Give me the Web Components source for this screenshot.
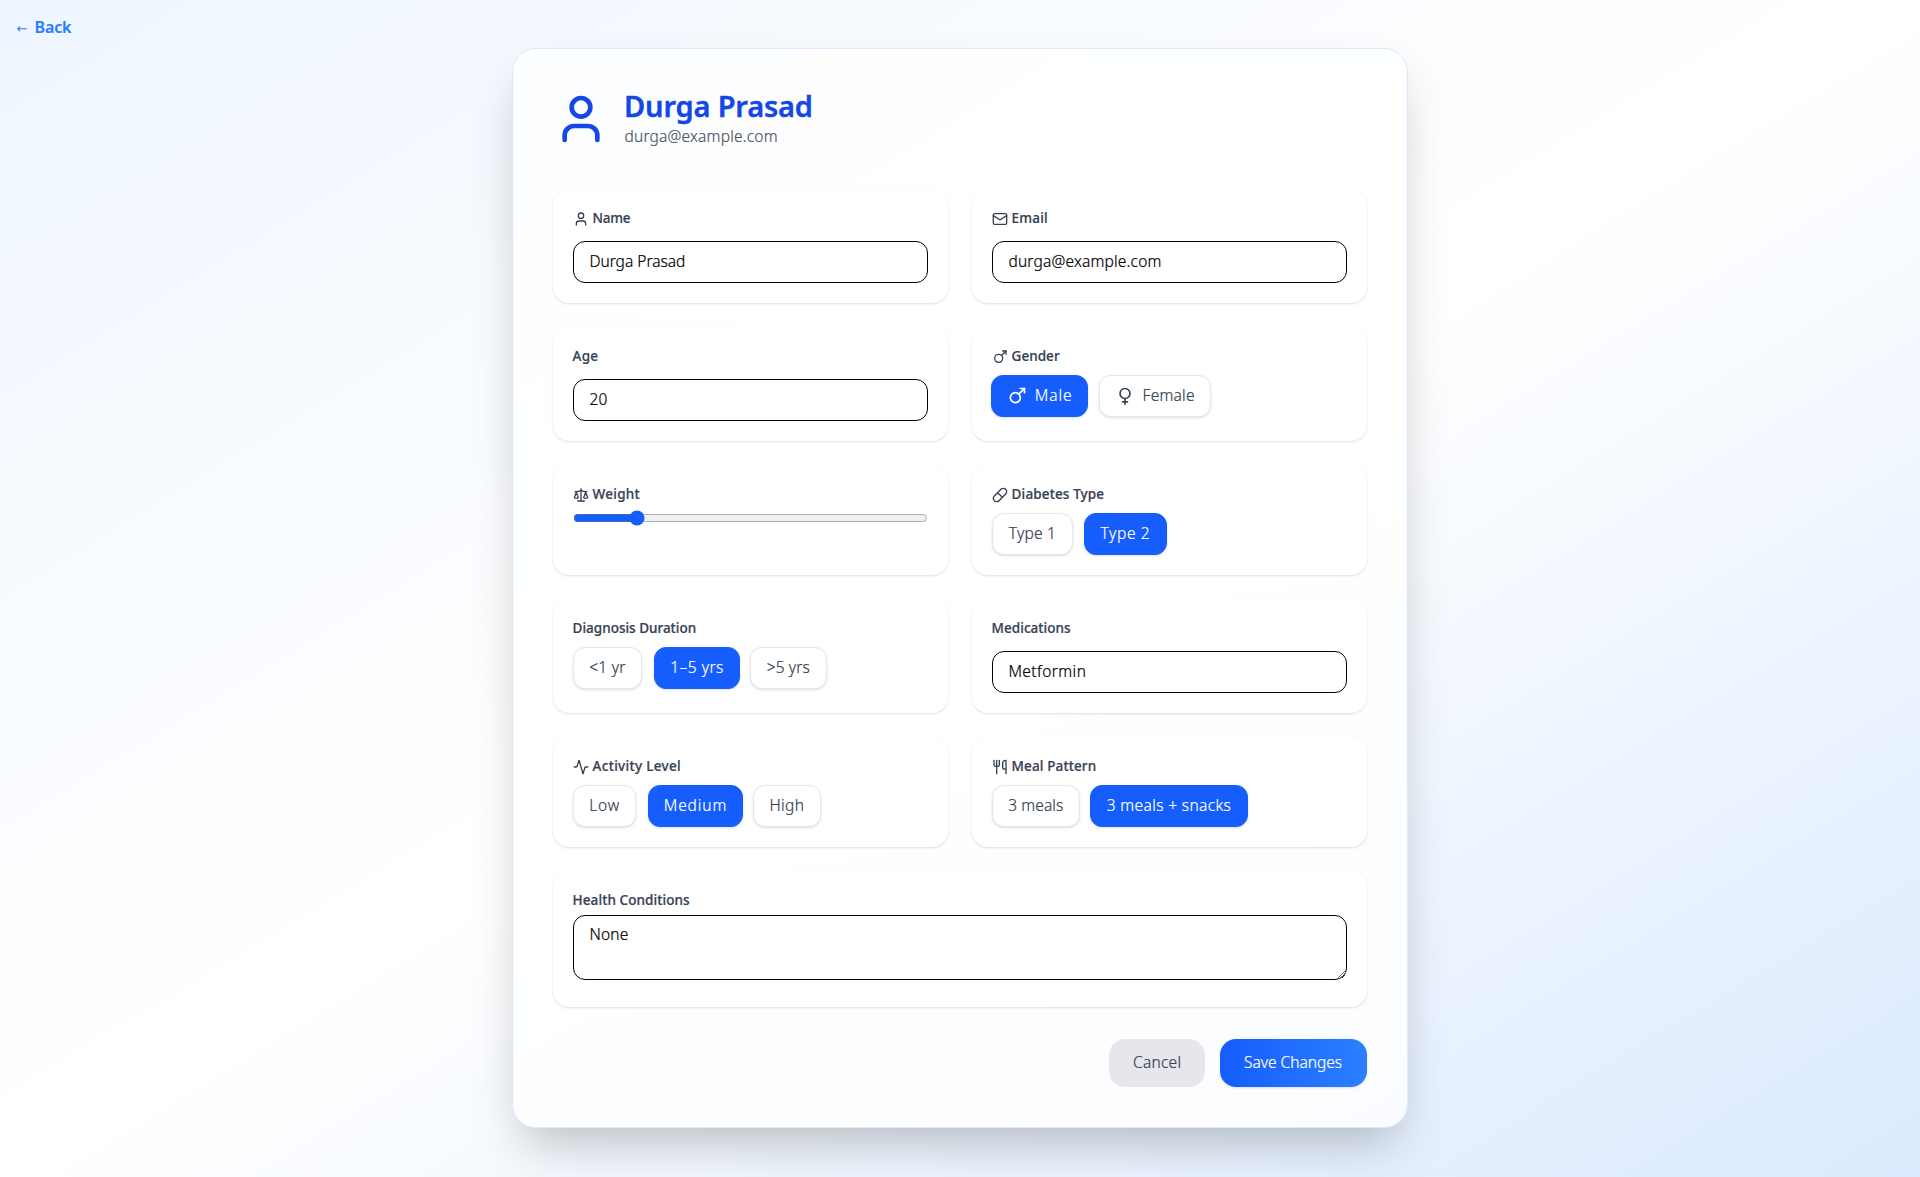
<!DOCTYPE html>
<html lang="en">
<head>
<meta charset="utf-8">
<title>Profile</title>
<style>
  body { margin: 0; font-family: "Noto Sans", sans-serif; font-size: 15.5px; font-weight: 300; -webkit-text-stroke: .22px; }
</style>
</head>
<body>
<profile-page></profile-page>
<script>
const ICONS = {
  user: '<path d="M19 21v-2a4 4 0 0 0-4-4H9a4 4 0 0 0-4 4v2"/><circle cx="12" cy="7" r="4"/>',
  mail: '<path d="m22 7-8.991 5.727a2 2 0 0 1-2.009 0L2 7"/><rect x="2" y="4" width="20" height="16" rx="2"/>',
  mars: '<path d="M16 3h5v5"/><path d="m21 3-6.75 6.75"/><circle cx="10" cy="14" r="6"/>',
  venus: '<path d="M12 15v7"/><path d="M9 19h6"/><circle cx="12" cy="9" r="6"/>',
  scale: '<path d="m16 16 3-8 3 8c-.87.65-1.92 1-3 1s-2.13-.35-3-1Z"/><path d="m2 16 3-8 3 8c-.87.65-1.92 1-3 1s-2.13-.35-3-1Z"/><path d="M7 21h10"/><path d="M12 3v18"/><path d="M3 7h2c2 0 5-1 7-2 2 1 5 2 7 2h2"/>',
  pill: '<path d="m10.5 20.5 10-10a4.95 4.95 0 1 0-7-7l-10 10a4.95 4.95 0 1 0 7 7Z"/><path d="m8.5 8.5 7 7"/>',
  activity: '<path d="M22 12h-2.48a2 2 0 0 0-1.93 1.46l-2.35 8.36a.25.25 0 0 1-.48 0L9.24 2.18a.25.25 0 0 0-.48 0l-2.35 8.36A2 2 0 0 1 4.49 12H2"/>',
  utensils: '<path d="M3 2v7c0 1.1.9 2 2 2h4a2 2 0 0 0 2-2V2"/><path d="M7 2v20"/><path d="M21 15V2a5 5 0 0 0-5 5v6c0 1.1.9 2 2 2h3Zm0 0v7"/>'
};
const pen = document.createElement('canvas').getContext('2d');
// Letter spacing that sets a text in the given width.
function tracking(el, text, width) {
  const cs = getComputedStyle(el);
  pen.font = `${cs.fontWeight} ${cs.fontSize} ${cs.fontFamily}`;
  return (width - pen.measureText(text).width) / (text.length - 1);
}

class UiIcon extends HTMLElement {
  connectedCallback() {
    const s = this.getAttribute('size') || 16;
    this.attachShadow({mode: 'open'}).innerHTML =
      `<style>:host{display:block;flex:none;width:${s}px;height:${s}px}svg{display:block}</style>
       <svg width="${s}" height="${s}" viewBox="0 0 24 24" fill="none" stroke="currentColor" stroke-width="2" stroke-linecap="round" stroke-linejoin="round">${ICONS[this.getAttribute('name')]}</svg>`;
  }
}
customElements.define('ui-icon', UiIcon);

class FitText extends HTMLElement {
  connectedCallback() {
    this.attachShadow({mode: 'open'}).innerHTML = '<style>:host{display:block;white-space:nowrap}</style><slot></slot>';
    const w = +this.getAttribute('w');
    this.style.width = w + 'px';
    this.style.letterSpacing = tracking(this, this.textContent, w) + 'px';
  }
}
customElements.define('fit-text', FitText);

class FieldCard extends HTMLElement {
  connectedCallback() {
    const icon = this.getAttribute('icon');
    this.attachShadow({mode: 'open'}).innerHTML = `
      <style>
        :host{display:block;box-sizing:border-box;padding:20px;border-radius:16px;background:#fff;
          box-shadow:0 1px 3px rgb(0 0 0/.1),0 1px 2px -1px rgb(0 0 0/.1)}
        :host([wide]){grid-column:1/-1}
        .label{display:flex;gap:4px;height:24px;color:#364153;font-size:13.5px;font-weight:500;line-height:18px}
        .label fit-text{margin-left:-.4px}
        ui-icon{margin-top:1.6px}
      </style>
      <div class="label">${icon ? `<ui-icon name="${icon}"></ui-icon>` : ''}<fit-text w="${this.getAttribute('lw')}">${this.getAttribute('label')}</fit-text></div>
      <slot></slot>`;
  }
}
customElements.define('field-card', FieldCard);

class TextField extends HTMLElement {
  connectedCallback() {
    const v = this.getAttribute('value'), area = this.hasAttribute('area');
    this.attachShadow({mode: 'open'}).innerHTML = `
      <style>
        :host{display:block}
        input,textarea{display:block;box-sizing:border-box;width:100%;margin:0;border:1px solid #000;border-radius:12px;
          background:transparent;color:#000;font:inherit;outline:0}
        input{height:42px;margin-top:8px;padding:7px 15.4px 9px;line-height:24px}
        textarea{height:65px;padding:6px 15.4px;line-height:24px;resize:vertical;overflow:hidden}
      </style>
      ${area ? `<textarea>${v}</textarea>` : `<input value="${v}">`}`;
    const f = this.shadowRoot.querySelector('input,textarea');
    f.style.letterSpacing = tracking(f, v, +this.getAttribute('w')) + 'px';
  }
}
customElements.define('text-field', TextField);

class RangeField extends HTMLElement {
  connectedCallback() {
    this.attachShadow({mode: 'open'}).innerHTML = `
      <style>:host{display:block}input{display:block;width:100%;height:16px;margin:1px 0 0;accent-color:#155dfc}</style>
      <input type="range" min="30" max="200" value="58">`;
  }
}
customElements.define('range-field', RangeField);

class ChoiceRow extends HTMLElement {
  connectedCallback() {
    this.attachShadow({mode: 'open'}).innerHTML =
      '<style>:host{display:flex;padding-top:4px}</style><slot></slot>';
  }
}
customElements.define('choice-row', ChoiceRow);

class ChoiceButton extends HTMLElement {
  connectedCallback() {
    const icon = this.getAttribute('icon');
    this.attachShadow({mode: 'open'}).innerHTML = `
      <style>
        :host{display:block;flex:none;width:${this.getAttribute('bw')}px;margin-left:${this.getAttribute('gap') || 0}px}
        button{box-sizing:border-box;display:flex;justify-content:center;align-items:center;gap:7.6px;width:100%;height:42px;
          margin:0;padding:0 .5px 3px 0;border:1px solid #e5e7eb;border-radius:12px;background:#fff;color:#364153;font:inherit;line-height:24px;
          box-shadow:0 1px 3px rgb(0 0 0/.1),0 1px 2px -1px rgb(0 0 0/.1)}
        :host([selected]) button{border-color:#155dfc;background:#155dfc;color:#fff}
        ui-icon{margin-top:3px}
      </style>
      <button>${icon ? `<ui-icon name="${icon}" size="${this.getAttribute('is')}"></ui-icon>` : ''}<slot></slot></button>`;
  }
}
customElements.define('choice-button', ChoiceButton);

class ActionButton extends HTMLElement {
  connectedCallback() {
    this.attachShadow({mode: 'open'}).innerHTML = `
      <style>
        :host{display:block}
        button{display:block;height:48px;margin:0;padding:0 24px 3px;border:0;border-radius:16px;background:#e5e7eb;color:#364153;font:inherit}
        :host([primary]) button{padding:0 25px 3px 24px;background:linear-gradient(to right,#155dfc,#2b7fff);color:#fff;
          box-shadow:0 1px 3px rgb(0 0 0/.1),0 1px 2px -1px rgb(0 0 0/.1)}
      </style><button><slot></slot></button>`;
  }
}
customElements.define('action-button', ActionButton);

class ProfileHeader extends HTMLElement {
  connectedCallback() {
    this.attachShadow({mode: 'open'}).innerHTML = `
      <style>
        :host{display:flex;align-items:center;gap:15px;height:60px;margin-bottom:40px;color:#1447e6}
        h1{margin:0;font-size:29px;line-height:34px;font-weight:600;-webkit-text-stroke:.4px}
        .mail{padding-left:.5px;color:#4a5565;line-height:26px;height:26px}
      </style>
      <ui-icon name="user" size="56"></ui-icon>
      <div><h1><fit-text w="189">Durga Prasad</fit-text></h1><div class="mail"><fit-text w="153">durga@example.com</fit-text></div></div>`;
  }
}
customElements.define('profile-header', ProfileHeader);

class ProfilePage extends HTMLElement {
  connectedCallback() {
    this.attachShadow({mode: 'open'}).innerHTML = `
      <style>
        :host{display:flex;flex-direction:column;align-items:center;box-sizing:border-box;height:1177px;
          background:linear-gradient(to bottom right,#eff6ff,#fff,#dbeafe)}
        nav{align-self:stretch;box-sizing:border-box;height:48px;padding:15px 16.5px 0}
        a{display:flex;color:#2b7fff;font-size:16px;font-weight:600;line-height:24px;text-decoration:none}
        .arrow{width:18px;font:400 13px/28px "DejaVu Sans",sans-serif;-webkit-text-stroke:0}
        main{box-sizing:border-box;width:896px;height:1080px;padding:40px;border:1px solid #dbeafe;border-radius:24px;
          background:rgb(255 255 255/.8);box-shadow:0 25px 50px -12px rgb(0 0 0/.25)}
        .grid{display:grid;grid-template-columns:1fr 1fr;grid-template-rows:114px 114px 110px 114px 110px 136px;gap:24px}
        footer{display:flex;justify-content:flex-end;gap:15px;margin-top:32px}
      </style>
      <nav><a><span class="arrow">←</span><fit-text w="37">Back</fit-text></a></nav>
      <main>
        <profile-header></profile-header>
        <div class="grid">
          <field-card icon="user" label="Name" lw="38"><text-field value="Durga Prasad" w="96"></text-field></field-card>
          <field-card icon="mail" label="Email" lw="36"><text-field value="durga@example.com" w="153"></text-field></field-card>
          <field-card label="Age" lw="25.5"><text-field value="20" w="18"></text-field></field-card>
          <field-card icon="mars" label="Gender" lw="48"><choice-row>
            <choice-button selected icon="mars" is="20" bw="97.2" gap="-1"><fit-text w="37">Male</fit-text></choice-button>
            <choice-button icon="venus" is="20" bw="112" gap="10.8"><fit-text w="52">Female</fit-text></choice-button></choice-row></field-card>
          <field-card icon="scale" label="Weight" lw="47"><range-field></range-field></field-card>
          <field-card icon="pill" label="Diabetes Type" lw="92.5"><choice-row>
            <choice-button bw="81"><fit-text w="47">Type 1</fit-text></choice-button>
            <choice-button selected bw="83.3" gap="10.7"><fit-text w="49">Type 2</fit-text></choice-button></choice-row></field-card>
          <field-card label="Diagnosis Duration" lw="123.5"><choice-row>
            <choice-button bw="69"><fit-text w="36">&lt;1 yr</fit-text></choice-button>
            <choice-button selected bw="86" gap="12"><fit-text w="53">1–5 yrs</fit-text></choice-button>
            <choice-button bw="77" gap="10"><fit-text w="43">&gt;5 yrs</fit-text></choice-button></choice-row></field-card>
          <field-card label="Medications" lw="79"><text-field value="Metformin" w="77.5"></text-field></field-card>
          <field-card icon="activity" label="Activity Level" lw="88"><choice-row>
            <choice-button bw="63"><fit-text w="30">Low</fit-text></choice-button>
            <choice-button selected bw="95.5" gap="11.5"><fit-text w="62.5">Medium</fit-text></choice-button>
            <choice-button bw="68" gap="10"><fit-text w="34.5">High</fit-text></choice-button></choice-row></field-card>
          <field-card icon="utensils" label="Meal Pattern" lw="84.5"><choice-row>
            <choice-button bw="88"><fit-text w="55">3 meals</fit-text></choice-button>
            <choice-button selected bw="158" gap="10"><fit-text w="124">3 meals + snacks</fit-text></choice-button></choice-row></field-card>
          <field-card wide label="Health Conditions" lw="117"><text-field area value="None" w="39"></text-field></field-card>
        </div>
        <footer>
          <action-button><fit-text w="48">Cancel</fit-text></action-button>
          <action-button primary><fit-text w="98">Save Changes</fit-text></action-button>
        </footer>
      </main>`;
  }
}
customElements.define('profile-page', ProfilePage);
</script>
</body>
</html>
